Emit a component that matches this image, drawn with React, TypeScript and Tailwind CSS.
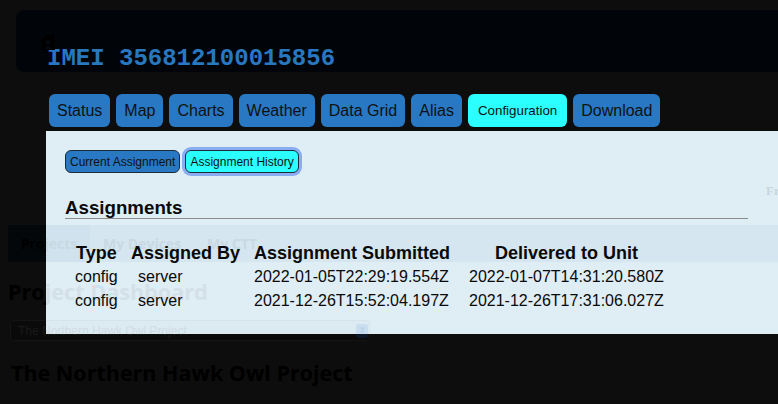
import React from 'react';

const tabs = ['Status', 'Map', 'Charts', 'Weather', 'Data Grid', 'Alias', 'Configuration', 'Download'];

const assignments = [
  { type: 'config', by: 'server', submitted: '2022-01-05T22:29:19.554Z', delivered: '2022-01-07T14:31:20.580Z' },
  { type: 'config', by: 'server', submitted: '2021-12-26T15:52:04.197Z', delivered: '2021-12-26T17:31:06.027Z' },
];

// the dashboard behind the dialog, drawn dark (under the backdrop) or pale (seen through the panel)
const dark = {
  faint: 'text-transparent',
  bar: 'bg-[#0a0c0e]',
  active: 'bg-[#03070a]',
  tabText: 'text-black',
  heading: 'text-black',
  select: 'bg-[#0a0a0a] border-[#141414]',
  selectText: 'text-[#1a1a1a]',
  arrow: 'bg-[#0a1726] text-[#12263c]',
};

const pale = {
  faint: 'text-[#c9d6dc]',
  bar: 'bg-[#d5e6f0]',
  active: 'bg-[#d0e2ed]',
  tabText: 'text-[#c9d9e3]',
  heading: 'text-[#d3e0e7]',
  select: 'bg-[#dcebf2] border-[#d5e3ea]',
  selectText: 'text-[#cfdce3]',
  arrow: 'bg-[#c8ddef] text-[#b4cfe8]',
};

const PageBehind = ({ ghost }: { ghost?: boolean }) => {
  const c = ghost ? pale : dark;
  return (
    <div className="w-[778px] font-['Open_Sans',sans-serif]">
      <div className={`h-[225px] whitespace-nowrap pl-[766px] pt-[181px] font-['Liberation_Serif',serif] text-[13px] font-bold ${c.faint}`}>
        From
      </div>
      <div className={`ml-[8px] flex h-[37px] items-center text-[14px] font-bold ${c.bar} ${c.tabText}`}>
        <div className={`flex h-full w-[82px] items-center justify-center ${c.active}`}>Projects</div>
        <div className="ml-[13px]">My Devices</div>
        <div className="ml-[26px]">My CTT</div>
      </div>
      <h2 className={`ml-[8px] mt-[15px] text-[21.6px] font-bold leading-[30px] ${c.heading}`}>Project Dashboard</h2>
      <div className={`ml-[10px] mt-[13px] flex h-[21px] w-[360px] items-center justify-between rounded-[4px] border pl-[7px] pr-[1px] font-['Liberation_Sans',sans-serif] text-[12px] ${c.select} ${c.selectText}`}>
        <span>The Northern Hawk Owl Project</span>
        <span className={`flex h-[14px] w-[12px] items-center justify-center rounded-[3px] text-[8px] leading-none ${c.arrow}`}>⇕</span>
      </div>
      <h2 className={`ml-[11px] mt-[17px] text-[21.5px] font-bold leading-[30px] ${c.heading}`}>The Northern Hawk Owl Project</h2>
    </div>
  );
};

const HouseUser = () => (
  <svg width="20" height="18" viewBox="0 0 20 18" className="absolute left-[22px] top-[23px]">
    <rect x="13" y="1" width="3" height="5" fill="#000" />
    <path d="M10 1 L19 9 L17 9 L17 17 L3 17 L3 9 L1 9 Z" fill="#000" />
    <circle cx="10" cy="9" r="2.2" fill="#040a12" />
    <path d="M6 16 Q10 11 14 16 Z" fill="#040a12" />
  </svg>
);

export default function App() {
  return (
    <div className="relative h-[404px] w-[778px] overflow-hidden bg-[#0d0d0d]">
      <PageBehind />

      <div className="absolute inset-0 font-['Liberation_Sans',Arial,sans-serif]">
        {/* device header */}
        <div className="relative ml-[16px] mt-[10px] h-[62px] rounded-l-[8px] bg-[#01050a] pl-[31px] pt-[37px]">
          <HouseUser />
          <h2 className="font-['Liberation_Mono',monospace] text-[24px] font-bold leading-none text-[#2878c0]">
            IMEI 356812100015856
          </h2>
        </div>

        {/* tabs */}
        <div className="ml-[49px] mt-[22px] flex gap-[6px]">
          {tabs.map((t) => (
            <button
              key={t}
              className={`flex h-[33px] items-center rounded-[6px] text-[#111] ${
                t === 'Configuration' ? 'bg-[#2bffff] px-[10px] text-[13.33px]' : 'bg-[#2878c4] px-2 text-[16px]'
              }`}
            >
              {t}
            </button>
          ))}
        </div>

        {/* configuration panel */}
        <div className="relative ml-[46px] mt-[4px] h-[203px] overflow-hidden bg-[#dfedf4]">
          <div className="pointer-events-none absolute left-[-46px] top-[-131px]">
            <PageBehind ghost />
          </div>

          <div className="relative pl-[19px] pr-[30px] pt-[19px] text-[#0a0a0a]">
            <div className="flex h-[23px] gap-[5px]">
              <button className="h-[23px] rounded-[6px] border border-[#1c2b3a] bg-[#2878c4] px-1 text-[12px] text-[#111]">
                Current Assignment
              </button>
              <button className="h-[23px] rounded-[6px] border border-[#1c2b3a] bg-[#2bffff] px-1 text-[12px] text-[#111] ring-[3px] ring-[#8aadf2]">
                Assignment History
              </button>
            </div>

            <h3 className="mt-[24px] border-b border-[#8c8c8c] text-[18.72px] font-bold leading-[21px]">Assignments</h3>

            <div className="ml-[10px] mt-[22px] text-[16px]">
              <div className="flex h-[24px] items-center text-[18px] font-bold">
                <div className="w-[56px] pl-[1px]">Type</div>
                <div className="w-[123px]">Assigned By</div>
                <div className="w-[215px]">Assignment Submitted</div>
                <div className="w-[195px] text-center">Delivered to Unit</div>
              </div>
              {assignments.map((a, i) => (
                <div key={i} className="flex h-[24px] items-center">
                  <div className="w-[56px]">{a.type}</div>
                  <div className="w-[123px] pl-[7px]">{a.by}</div>
                  <div className="w-[215px]">{a.submitted}</div>
                  <div className="w-[195px]">{a.delivered}</div>
                </div>
              ))}
            </div>
          </div>
        </div>
      </div>
    </div>
  );
}
